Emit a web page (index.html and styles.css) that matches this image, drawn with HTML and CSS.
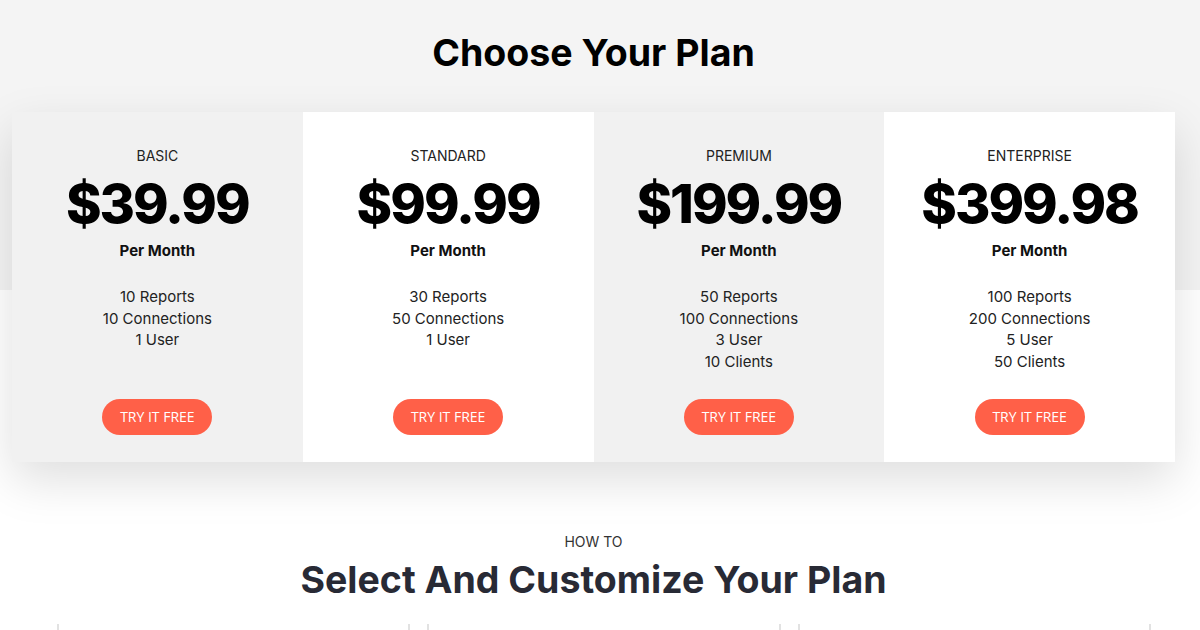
FILE: index.html
```html
<!DOCTYPE html>
<html lang="en">
<head>
<meta charset="utf-8">
<title>Choose Your Plan</title>
<link rel="stylesheet" href="styles.css">
</head>
<body>
<div class="page">
<section class="pricing">
  <h1 class="pricing-title">Choose Your Plan</h1>
  <div class="plans">
    <div class="plan plan-grey">
      <div class="plan-name">BASIC</div>
      <div class="plan-price">$39.99</div>
      <div class="plan-period">Per Month</div>
      <ul class="plan-features">
        <li>10 Reports</li>
        <li>10 Connections</li>
        <li>1 User</li>
      </ul>
      <a class="plan-btn" href="#">TRY IT FREE</a>
    </div>
    <div class="plan plan-white">
      <div class="plan-name">STANDARD</div>
      <div class="plan-price">$99.99</div>
      <div class="plan-period">Per Month</div>
      <ul class="plan-features">
        <li>30 Reports</li>
        <li>50 Connections</li>
        <li>1 User</li>
      </ul>
      <a class="plan-btn" href="#">TRY IT FREE</a>
    </div>
    <div class="plan plan-grey">
      <div class="plan-name">PREMIUM</div>
      <div class="plan-price">$199.99</div>
      <div class="plan-period">Per Month</div>
      <ul class="plan-features">
        <li>50 Reports</li>
        <li>100 Connections</li>
        <li>3 User</li>
        <li>10 Clients</li>
      </ul>
      <a class="plan-btn" href="#">TRY IT FREE</a>
    </div>
    <div class="plan plan-white">
      <div class="plan-name">ENTERPRISE</div>
      <div class="plan-price">$399.98</div>
      <div class="plan-period">Per Month</div>
      <ul class="plan-features">
        <li>100 Reports</li>
        <li>200 Connections</li>
        <li>5 User</li>
        <li>50 Clients</li>
      </ul>
      <a class="plan-btn" href="#">TRY IT FREE</a>
    </div>
  </div>
</section>
<section class="howto">
  <div class="howto-eyebrow">HOW TO</div>
  <h2 class="howto-title">Select And Customize Your Plan</h2>
  <div class="steps">
    <div class="step">+ Overview</div>
    <div class="step">+ Budget</div>
    <div class="step">+ Single Sign-On <span class="step-link">(SSO)</span></div>
  </div>
</section>
</div>
</body>
</html>
```

FILE: styles.css
```css
html, body {
  margin: 0;
  padding: 0;
  font-family: "Inter", "Open Sans", sans-serif;
  color: #111;
  overflow: hidden;
}

body {
  background: linear-gradient(#f4f4f4 0, #f4f4f4 290px, #fff 290px) no-repeat;
  background-color: #fff;
}

.page {
  width: 1187px;
}

.pricing {
  padding-top: 30px;
}

.pricing-title {
  margin: 0;
  text-align: center;
  font-size: 37.5px;
  line-height: 46px;
  font-weight: 700;
  color: #000;
}

.plans {
  margin: 36px 0 0 12px;
  width: 1163px;
  display: grid;
  grid-template-columns: repeat(4, 1fr);
  box-shadow: 0 18px 45px rgba(0, 0, 0, 0.13);
}

.plan {
  height: 350px;
  box-sizing: border-box;
  padding: 34px 0 27px;
  display: flex;
  flex-direction: column;
  align-items: center;
  text-align: center;
}

.plan-grey { background: #f1f1f1; }
.plan-white { background: #fff; }

.plan-name {
  font-size: 14px;
  line-height: 20px;
  color: #222;
}

.plan-price {
  margin-top: 6px;
  font-size: 54px;
  line-height: 64px;
  font-weight: 800;
  color: #000;
  letter-spacing: -2px;
}

.plan-period {
  margin-top: 5px;
  font-size: 15px;
  line-height: 20px;
  font-weight: 700;
  color: #111;
}

.plan-features {
  list-style: none;
  margin: 25px 0 0;
  padding: 0;
  font-size: 15px;
  line-height: 21.5px;
  color: #222;
}

.plan-btn {
  margin-top: auto;
  width: 110px;
  height: 36px;
  border-radius: 18px;
  background: #ff6048;
  color: #fff;
  text-decoration: none;
  font-family: "Open Sans", sans-serif;
  font-size: 14px;
  line-height: 36px;
}

.howto {
  padding-top: 70px;
  text-align: center;
}

.howto-eyebrow {
  font-size: 14px;
  line-height: 20px;
  color: #333;
}

.howto-title {
  margin: 5px 0 0;
  font-size: 37.5px;
  line-height: 46px;
  font-weight: 700;
  color: #282a35;
}

.steps {
  margin: 21px 0 0 57px;
  width: 1094px;
  display: grid;
  grid-template-columns: repeat(3, 1fr);
  gap: 17px;
}

.step {
  border-left: 2px solid #e2e2e2;
  border-right: 2px solid #e2e2e2;
  padding: 3px 0 0 38px;
  text-align: left;
  font-size: 13px;
  line-height: 20px;
  color: #333;
  height: 40px;
}

.step-link { color: #1a4fa0; }
```
